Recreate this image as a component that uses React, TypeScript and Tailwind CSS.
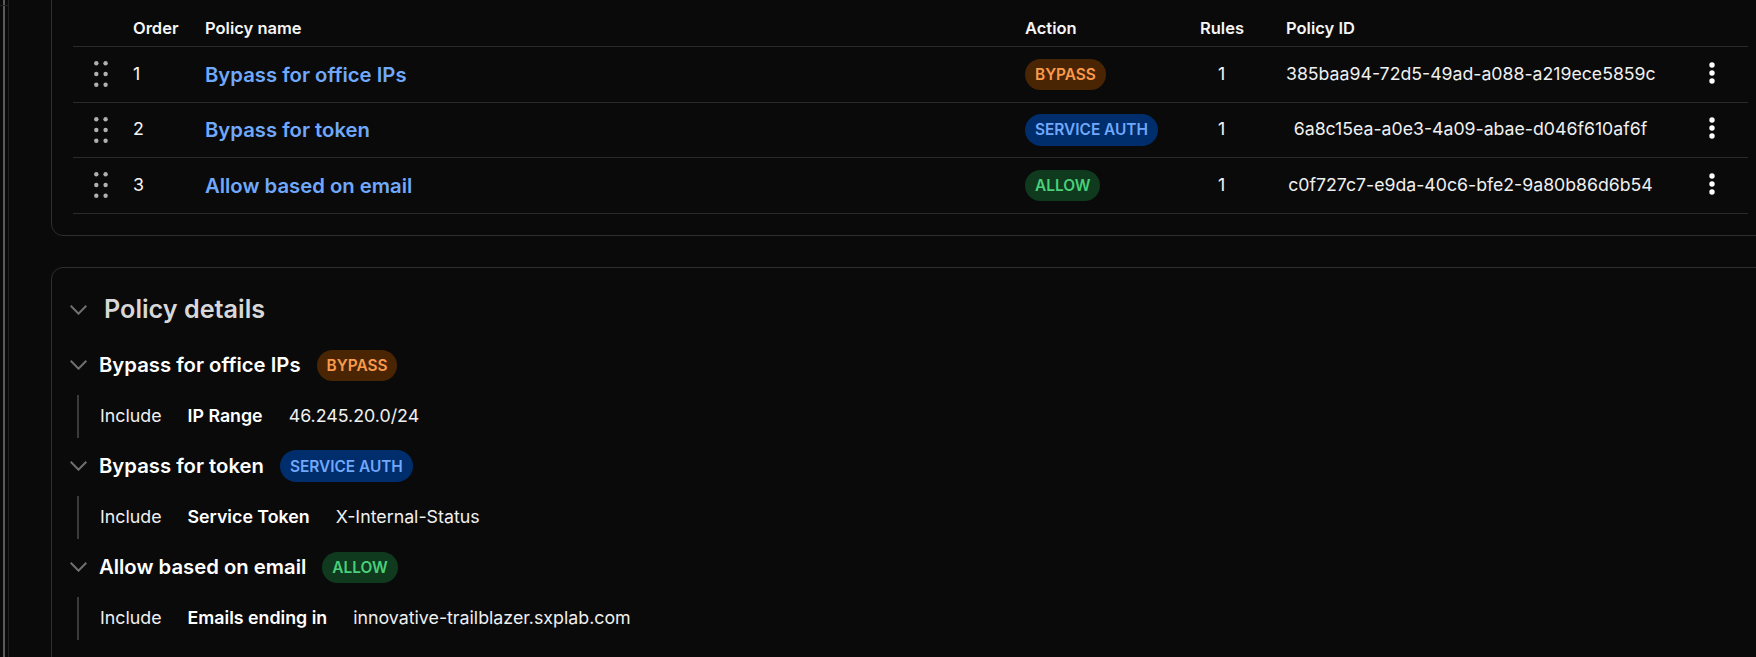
type Action = "bypass" | "service" | "allow";

const policies: { order: number; name: string; action: Action; id: string; label: string; selector: string; value: string }[] = [
  { order: 1, name: "Bypass for office IPs", action: "bypass", id: "385baa94-72d5-49ad-a088-a219ece5859c", label: "Include", selector: "IP Range", value: "46.245.20.0/24" },
  { order: 2, name: "Bypass for token", action: "service", id: "6a8c15ea-a0e3-4a09-abae-d046f610af6f", label: "Include", selector: "Service Token", value: "X-Internal-Status" },
  { order: 3, name: "Allow based on email", action: "allow", id: "c0f727c7-e9da-40c6-bfe2-9a80b86d6b54", label: "Include", selector: "Emails ending in", value: "innovative-trailblazer.sxplab.com" },
];

function ActionPill({ action }: { action: Action }) {
  if (action === "bypass") {
    return <span className="inline-flex h-[31px] items-center rounded-full bg-[#4a2504] px-[10px] text-[15.4px] font-semibold text-[#fb9a4b]">BYPASS</span>;
  }
  if (action === "service") {
    return <span className="inline-flex h-[32px] items-center rounded-full bg-[#002d6c] px-[10px] text-[15.4px] font-semibold text-[#70a8fb]">SERVICE AUTH</span>;
  }
  return <span className="inline-flex h-[31px] items-center rounded-full bg-[#0f3a1e] px-[10px] text-[15.4px] font-semibold text-[#4ad07a]">ALLOW</span>;
}

function DragDots() {
  return (
    <svg width="14" height="26" viewBox="0 0 14 26" className="fill-[#b0b0b0]">
      {[2.3, 13, 23.7].map((y) => (
        <g key={y}>
          <circle cx="2.3" cy={y} r="2.2" />
          <circle cx="11.6" cy={y} r="2.2" />
        </g>
      ))}
    </svg>
  );
}

function Kebab() {
  return (
    <svg width="6" height="22" viewBox="0 0 6 22" className="fill-white">
      <circle cx="3" cy="3" r="2.7" />
      <circle cx="3" cy="11" r="2.7" />
      <circle cx="3" cy="19" r="2.7" />
    </svg>
  );
}

function Chevron() {
  return (
    <svg width="17" height="10" viewBox="0 0 17 10" fill="none" className="shrink-0 stroke-[#707070]" strokeWidth="2">
      <path d="M0.7 0.8 L8.5 8.7 L16.3 0.8" />
    </svg>
  );
}

export default function App() {
  return (
    <div className="relative flex h-[657px] w-[1756px] overflow-hidden bg-[#0a0a0a] font-['Inter',sans-serif] text-white">
      <div className="absolute left-0 top-[5px] h-px w-[8px] bg-[#222222]" />
      <div className="ml-[3px] h-full w-[2px] shrink-0 bg-[#5a5a5a]" />
      <div className="ml-[3px] h-full w-px shrink-0 bg-[#222222]" />
      <div className="ml-[42px] w-[1800px] shrink-0">
        {/* policies table */}
        <div className="-mt-[20px] h-[256px] rounded-[12px] border border-[#2e2e2e] pl-[21px] pt-[20px]">
          <div className="w-[1675px]">
            <div className="flex h-[46px] items-end border-b border-[#2a2a2a] pb-[5px] text-[16.5px] font-semibold text-[#f5f5f5]">
              <div className="w-[60px]" />
              <div className="w-[72px]">Order</div>
              <div className="w-[820px]">Policy name</div>
              <div className="w-[174px]">Action</div>
              <div className="w-[87px] pl-[1px]">Rules</div>
              <div>Policy ID</div>
            </div>
            {policies.map((p) => (
              <div key={p.order} className="flex h-[55.5px] items-center border-b border-[#2a2a2a]">
                <div className="flex w-[60px] pl-[21px]">
                  <DragDots />
                </div>
                <div className="w-[72px] text-[17.8px] text-[#f5f5f5]">{p.order}</div>
                <div className="w-[820px] pt-[1px] text-[20.3px] font-semibold text-[#70a8fb]">{p.name}</div>
                <div className="w-[174px]">
                  <ActionPill action={p.action} />
                </div>
                <div className="w-[87px] pr-[42px] text-center text-[17.8px] text-[#f5f5f5]">1</div>
                <div className="w-[369px] whitespace-nowrap text-center text-[17.7px] text-[#f0f0f0]">{p.id}</div>
                <div className="flex flex-1 justify-end pb-[3px] pr-[33px]">
                  <Kebab />
                </div>
              </div>
            ))}
          </div>
        </div>

        {/* policy details */}
        <div className="mt-[31px] h-[500px] rounded-[12px] border border-[#2e2e2e] pl-[18px] pt-[23px]">
          <div className="flex items-center">
            <Chevron />
            <h2 className="ml-[17px] text-[25.2px] font-semibold text-[#d8d8d8]">Policy details</h2>
          </div>
          <div className="mt-[21px] flex flex-col gap-[13px]">
            {policies.map((p) => (
              <div key={p.order}>
                <div className="flex h-[31px] items-center">
                  <Chevron />
                  <span className="ml-[12px] text-[20.3px] font-semibold text-white">{p.name}</span>
                  <span className="ml-[16px]">
                    <ActionPill action={p.action} />
                  </span>
                </div>
                <div className="ml-[7px] mt-[14px] flex h-[43px] items-center gap-[26px] border-l-2 border-[#3a3a3a] pl-[21px] text-[17.8px]">
                  <span className="text-[#f0f0f0]">{p.label}</span>
                  <span className="font-semibold text-white">{p.selector}</span>
                  <span className="text-[#f0f0f0]">{p.value}</span>
                </div>
              </div>
            ))}
          </div>
        </div>
      </div>
    </div>
  );
}
